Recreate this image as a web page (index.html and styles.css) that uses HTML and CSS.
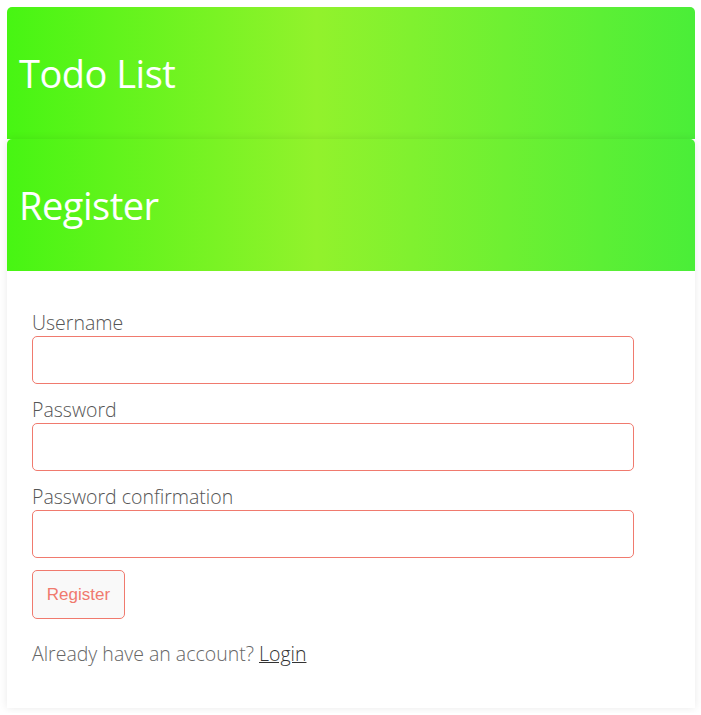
FILE: index.html
```html
<!DOCTYPE html>
<html lang="en">
<head>
<meta charset="utf-8">
<title>Todo List - Register</title>
<link rel="stylesheet" href="styles.css">
</head>
<body>
<div class="page">
  <div class="card card-top">
    <div class="card-header"><h1>Todo List</h1></div>
  </div>
  <div class="card">
    <div class="card-header"><h1>Register</h1></div>
    <div class="card-body">
      <form class="form">
        <div class="field">
          <label class="label" for="u">Username</label>
          <input class="input" id="u" type="text">
        </div>
        <div class="field">
          <label class="label" for="p">Password</label>
          <input class="input" id="p" type="password">
        </div>
        <div class="field">
          <label class="label" for="pc">Password confirmation</label>
          <input class="input" id="pc" type="password">
        </div>
        <button class="btn" type="button">Register</button>
      </form>
      <p class="note">Already have an account? <a class="link" href="#">Login</a></p>
    </div>
  </div>
</div>
</body>
</html>
```

FILE: styles.css
```css
html, body {
  margin: 0;
  padding: 0;
  background: #ffffff;
}
body {
  font-family: "Open Sans", "Noto Sans", sans-serif;
  font-weight: 300;
  color: #555;
}
.page {
  padding: 7px 6px 5px 7px;
}
.card {
  background: #fff;
  border-radius: 5px 5px 0 0;
  box-shadow: 0 0 8px rgba(0, 0, 0, 0.09);
  overflow: hidden;
}
.card-top {
  box-shadow: none;
}
.card-header {
  height: 132px;
  display: flex;
  align-items: center;
  padding: 0 12px;
  background: linear-gradient(90deg, #47f513 0%, #92f22c 45%, #4aee38 100%);
}
.card-header h1 {
  margin: 0;
  font-size: 38px;
  font-weight: 400;
  color: #fff;
  letter-spacing: -0.5px;
}
.card-body {
  padding: 38px 25px 41px 25px;
}
.form {
  display: flex;
  flex-direction: column;
  align-items: flex-start;
}
.field {
  display: flex;
  flex-direction: column;
  margin-bottom: 12px;
}
.label {
  font-size: 19.5px;
  line-height: 27px;
  color: #555;
}
.input {
  width: 602px;
  height: 48px;
  box-sizing: border-box;
  border: 1px solid #f07a6e;
  border-radius: 5px;
  background: #fff;
  outline: none;
  padding: 0 12px;
  font: inherit;
}
.btn {
  height: 49px;
  width: 93px;
  box-sizing: border-box;
  border: 1px solid #f07a6e;
  border-radius: 5px;
  background: #f9f9f9;
  color: #f07a6e;
  font-family: "Liberation Sans", Arial, sans-serif;
  font-size: 17px;
  font-weight: 400;
  padding: 0;
}
.note {
  margin: 21px 0 0 0;
  font-size: 19.5px;
  line-height: 27px;
  color: #666;
}
.link {
  color: #333;
  text-decoration: underline;
}
```
